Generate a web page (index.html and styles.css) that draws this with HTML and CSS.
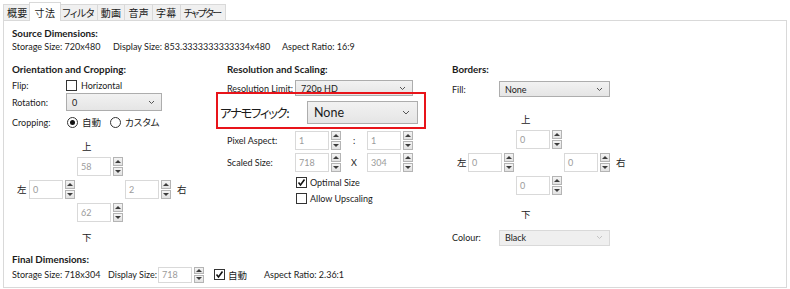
FILE: index.html
```html
<!DOCTYPE html>
<html lang="ja">
<head>
  <meta charset="UTF-8" />
  <title>寸法</title>
  <link rel="stylesheet" href="styles.css">
</head>
<body>

<div class="tabs">
  <span class="tab">概要</span>
  <span class="tab active">寸法</span>
  <span class="tab tab-kana">フィルタ</span>
  <span class="tab">動画</span>
  <span class="tab">音声</span>
  <span class="tab">字幕</span>
  <span class="tab tab-kana tab-long">チャプター</span>
</div>

<div class="panel">
  <div class="heading">Source Dimensions:</div>
  <div class="info">
    <span class="info-storage">Storage Size: 720x480</span>
    <span class="info-display">Display Size: 853.3333333333334x480</span>
    <span>Aspect Ratio: 16:9</span>
  </div>

  <div class="cols">
    <!-- left: orientation and cropping -->
    <div class="col">
      <div class="heading">Orientation and Cropping:</div>
      <div class="row row-flip">
        <span class="lbl lbl-left">Flip:</span>
        <span class="box"></span><span class="opt">Horizontal</span>
      </div>
      <div class="row row-rotation">
        <span class="lbl lbl-left">Rotation:</span>
        <div class="select select-rotation"><span>0</span><svg class="chev" width="7" height="5" viewBox="0 0 7 5"><path d="M1 1l2.5 2.5L6 1" fill="none" stroke="#555" stroke-width="1"/></svg></div>
      </div>
      <div class="row row-cropping">
        <span class="lbl lbl-left">Cropping:</span>
        <span class="radio on"></span><span class="opt jp">自動</span>
        <span class="radio"></span><span class="opt jp">カスタム</span>
      </div>

      <div class="crop crop-left">
        <span class="jp cell-top-label">上</span>
        <div class="spin cell-top"><span class="field">58</span><span class="arrows"><span class="up"></span><span class="down"></span></span></div>
        <span class="jp cell-left-label">左</span>
        <div class="spin cell-left"><span class="field">0</span><span class="arrows"><span class="up"></span><span class="down"></span></span></div>
        <div class="spin cell-right"><span class="field">2</span><span class="arrows"><span class="up"></span><span class="down"></span></span></div>
        <span class="jp cell-right-label">右</span>
        <div class="spin cell-bottom"><span class="field">62</span><span class="arrows"><span class="up"></span><span class="down"></span></span></div>
        <span class="jp cell-bottom-label">下</span>
      </div>
    </div>

    <!-- middle: resolution and scaling -->
    <div class="col">
      <div class="heading">Resolution and Scaling:</div>
      <div class="row row-res">
        <span class="lbl lbl-mid">Resolution Limit:</span>
        <div class="select select-res"><span>720p HD</span><svg class="chev" width="7" height="5" viewBox="0 0 7 5"><path d="M1 1l2.5 2.5L6 1" fill="none" stroke="#555" stroke-width="1"/></svg></div>
      </div>
      <div class="row row-anam">
        <span class="lbl lbl-anam jp">アナモフィック:</span>
        <div class="select select-anam"><span>None</span><svg class="chev" width="8" height="5" viewBox="0 0 8 5"><path d="M1 1l3 3 3-3" fill="none" stroke="#555" stroke-width="1"/></svg></div>
        <div class="highlight"></div>
      </div>
      <div class="row row-spin row-pixel">
        <span class="lbl lbl-mid">Pixel Aspect:</span>
        <div class="spin"><span class="field">1</span><span class="arrows"><span class="up"></span><span class="down"></span></span></div>
        <span class="sep">:</span>
        <div class="spin"><span class="field">1</span><span class="arrows"><span class="up"></span><span class="down"></span></span></div>
      </div>
      <div class="row row-spin row-scaled">
        <span class="lbl lbl-mid">Scaled Size:</span>
        <div class="spin"><span class="field">718</span><span class="arrows"><span class="up"></span><span class="down"></span></span></div>
        <span class="sep">X</span>
        <div class="spin"><span class="field">304</span><span class="arrows"><span class="up"></span><span class="down"></span></span></div>
      </div>
      <div class="row row-check row-optimal">
        <span class="box checked"><svg width="9" height="9" viewBox="0 0 9 9"><path d="M1.5 4.5l2 2.5L7.5 1.5" fill="none" stroke="#111" stroke-width="1.6"/></svg></span><span class="opt">Optimal Size</span>
      </div>
      <div class="row row-check row-upscale">
        <span class="box"></span><span class="opt">Allow Upscaling</span>
      </div>
    </div>

    <!-- right: borders -->
    <div class="col">
      <div class="heading">Borders:</div>
      <div class="row row-fill">
        <span class="lbl lbl-right">Fill:</span>
        <div class="select select-fill"><span>None</span><svg class="chev" width="7" height="5" viewBox="0 0 7 5"><path d="M1 1l2.5 2.5L6 1" fill="none" stroke="#555" stroke-width="1"/></svg></div>
      </div>

      <div class="crop crop-borders">
        <span class="jp cell-top-label">上</span>
        <div class="spin cell-top"><span class="field">0</span><span class="arrows"><span class="up"></span><span class="down"></span></span></div>
        <span class="jp cell-left-label">左</span>
        <div class="spin cell-left"><span class="field">0</span><span class="arrows"><span class="up"></span><span class="down"></span></span></div>
        <div class="spin cell-right"><span class="field">0</span><span class="arrows"><span class="up"></span><span class="down"></span></span></div>
        <span class="jp cell-right-label">右</span>
        <div class="spin cell-bottom"><span class="field">0</span><span class="arrows"><span class="up"></span><span class="down"></span></span></div>
        <span class="jp cell-bottom-label">下</span>
      </div>

      <div class="row row-colour">
        <span class="lbl lbl-right">Colour:</span>
        <div class="select select-fill disabled"><span>Black</span><svg class="chev" width="7" height="5" viewBox="0 0 7 5"><path d="M1 1l2.5 2.5L6 1" fill="none" stroke="#c4c4c4" stroke-width="1"/></svg></div>
      </div>
    </div>
  </div>

  <div class="heading heading-final">Final Dimensions:</div>
  <div class="row row-final">
    <span class="final-storage">Storage Size: 718x304</span>
    <span class="final-display">Display Size:</span>
    <div class="spin spin-small"><span class="field">718</span><span class="arrows"><span class="up"></span><span class="down"></span></span></div>
    <span class="box checked final-check"><svg width="9" height="9" viewBox="0 0 9 9"><path d="M1.5 4.5l2 2.5L7.5 1.5" fill="none" stroke="#111" stroke-width="1.6"/></svg></span><span class="opt jp">自動</span>
    <span class="final-aspect">Aspect Ratio: 2.36:1</span>
  </div>
</div>

</body>
</html>
```

FILE: styles.css
```css
body {
  margin: 0;
  background: #fff;
  color: #1b1b1b;
  font-family: Lato, "Noto Sans CJK JP", sans-serif;
  font-size: 9px;
}
.jp {
  font-family: "Noto Sans CJK JP", sans-serif;
  font-size: 9.5px;
  font-feature-settings: "palt";
}

/* tab strip */
.tabs {
  display: flex;
  padding: 4px 0 0 3px;
  height: 16px;
}
.tab {
  height: 16px;
  box-sizing: border-box;
  border: 1px solid #d9d9d9;
  border-bottom: none;
  background: #f0f0f0;
  margin-right: -1px;
  padding: 0 3px;
  line-height: 15px;
  font-family: "Noto Sans CJK JP", sans-serif;
  font-size: 10px;
  font-feature-settings: "palt";
  letter-spacing: 0.3px;
}
.tab-kana { letter-spacing: -0.6px; }
.tab-long { letter-spacing: -1.6px; padding-right: 4px; }
.tab.active {
  background: #fff;
  height: 19px;
  margin: -2px -3px 0 -2px;
  padding: 0 5px;
  line-height: 19px;
  position: relative;
  z-index: 1;
}

.panel {
  margin-left: 3px;
  width: 784px;
  height: 268px;
  box-sizing: border-box;
  border: 1px solid #d9d9d9;
  padding: 5px 8px 4px;
}
.heading {
  font-weight: 700;
  line-height: 14px;
  font-size: 9.8px;
}
.info {
  display: flex;
  line-height: 14px;
}
.info-storage { width: 101px; }
.info-display { width: 169px; }

.cols {
  display: grid;
  grid-template-columns: 215px 225px 1fr;
  margin-top: 8px;
}

.row {
  display: flex;
  align-items: center;
  height: 16px;
}
.lbl { flex: none; }
.lbl-left { width: 54px; }
.lbl-mid { width: 68px; }
.lbl-right { width: 47px; }
.opt { margin-left: 4px; margin-right: 8px; }

.row-flip { margin-top: 1px; }
.row-rotation { height: 18px; }
.row-cropping { margin-top: 3px; }

.box {
  width: 11px;
  height: 11px;
  box-sizing: border-box;
  border: 1px solid #333;
  background: #fff;
  display: flex;
  align-items: center;
  justify-content: center;
  flex: none;
}
.radio {
  width: 11px;
  height: 11px;
  box-sizing: border-box;
  border: 1px solid #333;
  border-radius: 50%;
  display: flex;
  align-items: center;
  justify-content: center;
  flex: none;
  margin-left: 1px;
}
.radio.on::after {
  content: "";
  width: 5px;
  height: 5px;
  border-radius: 50%;
  background: #111;
}

.select {
  display: flex;
  align-items: center;
  justify-content: space-between;
  box-sizing: border-box;
  border: 1px solid #adadad;
  background: linear-gradient(#f2f2f2, #e5e5e5);
  padding: 0 6px 0 5px;
  height: 16px;
}
.select.disabled {
  border-color: #d9d9d9;
  background: #efefef;
}
.select-rotation { width: 96px; height: 18px; }
.select-res { width: 118px; }
.select-fill { width: 111px; }

/* spinner fields */
.spin {
  display: flex;
  gap: 2px;
  height: 19px;
}
.field {
  width: 34px;
  box-sizing: border-box;
  border: 1px solid #d9d9d9;
  background: #fff;
  color: #9b9b9b;
  padding-left: 3px;
  display: flex;
  align-items: center;
}
.arrows {
  width: 10px;
  display: flex;
  flex-direction: column;
  gap: 1px;
}
.arrows span {
  flex: 1;
  box-sizing: border-box;
  border: 1px solid #b4b4b4;
  background: linear-gradient(#f4f4f4, #e2e2e2);
  display: flex;
  align-items: center;
  justify-content: center;
}
.arrows .up::before {
  content: "";
  border-left: 3px solid transparent;
  border-right: 3px solid transparent;
  border-bottom: 3px solid #3c3c3c;
}
.arrows .down::before {
  content: "";
  border-left: 3px solid transparent;
  border-right: 3px solid transparent;
  border-top: 3px solid #3c3c3c;
}
.spin-small { height: 16px; }

/* crop / border grids */
.crop {
  display: grid;
  grid-template-columns: 17px 48px 48px 48px auto;
  grid-template-rows: 13px 19px 19px 19px auto;
  row-gap: 4px;
}
.crop-left { margin-top: 10px; }
.crop-borders {
  grid-template-columns: 16px 48px 48px 48px auto;
  margin-top: 16px;
}
.crop .jp { line-height: 13px; }
.cell-top-label { grid-column: 3; grid-row: 1; padding-left: 5px; }
.cell-top { grid-column: 3; grid-row: 2; }
.cell-left-label { grid-column: 1; grid-row: 3; align-self: center; padding-left: 5px; }
.cell-left { grid-column: 2; grid-row: 3; }
.cell-right { grid-column: 4; grid-row: 3; }
.cell-right-label { grid-column: 5; grid-row: 3; align-self: center; padding-left: 4px; }
.cell-bottom { grid-column: 3; grid-row: 4; }
.cell-bottom-label { grid-column: 3; grid-row: 5; padding-left: 5px; padding-top: 5px; }
.crop-borders .cell-bottom-label { padding-top: 9px; }

/* middle column */
.row-res { margin-top: 4px; }
.row-anam {
  position: relative;
  width: fit-content;
  margin: 5px 0 0 -7px;
  height: 23px;
}
.lbl-anam {
  width: 87px;
  font-size: 12.5px;
  letter-spacing: -1.4px;
}
.select-anam {
  width: 111px;
  height: 23px;
  font-size: 12.5px;
  padding: 0 7px 0 6px;
}
.highlight {
  position: absolute;
  top: -9px;
  bottom: -5px;
  left: -4px;
  right: -8px;
  border: 2px solid #e8141a;
}
.row-spin { height: 19px; }
.row-pixel { margin-top: 7px; }
.row-scaled { margin-top: 3px; }
.sep {
  width: 26px;
  text-align: center;
}
.row-check {
  height: 14px;
  padding-left: 69px;
}
.row-optimal { margin-top: 3px; }
.row-upscale { margin-top: 2px; }
.row-check .opt { margin-left: 3px; }

/* right column */
.row-fill { margin-top: 5px; }
.row-colour { margin-top: 8px; height: 17px; }

/* final dimensions */
.heading-final { margin-top: 6px; }
.row-final { height: 17px; }
.final-storage { width: 96px; }
.final-display { width: 50px; }
.final-check { margin-left: 10px; }
.row-final .opt { margin-left: 3px; margin-right: 17px; }
```
